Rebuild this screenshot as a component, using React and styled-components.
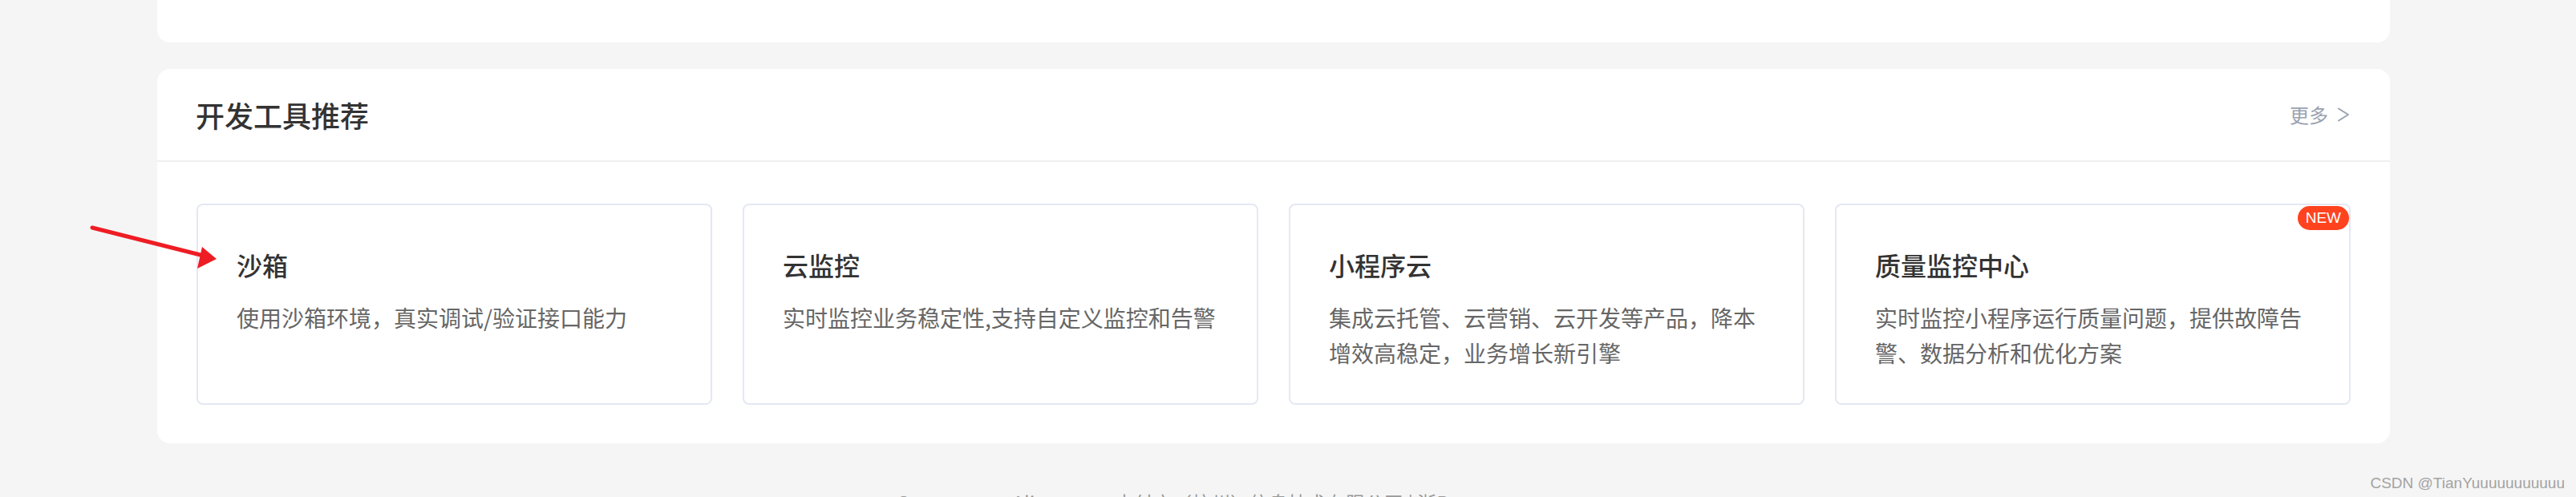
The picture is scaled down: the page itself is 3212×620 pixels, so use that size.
import React from 'react'
import styled, { createGlobalStyle } from 'styled-components'

const GlobalStyle = createGlobalStyle`
    * {
        box-sizing: border-box;
    }
    body {
        margin: 0;
        background: #f5f5f5;
        font-family: "Noto Sans CJK SC", "Noto Sans", "Liberation Sans", sans-serif;
        color: #333;
    }
`

const tools = [
    { title: '沙箱', desc: '使用沙箱环境，真实调试/验证接口能力' },
    { title: '云监控', desc: '实时监控业务稳定性,支持自定义监控和告警' },
    { title: '小程序云', desc: '集成云托管、云营销、云开发等产品，降本增效高稳定，业务增长新引擎' },
    { title: '质量监控中心', desc: '实时监控小程序运行质量问题，提供故障告警、数据分析和优化方案', isNew: true },
]

const Chevron = () => (
    <svg width='16' height='18' viewBox='0 0 16 18' fill='none'>
        <path d='M2 1.5 L14 9 L2 16.5' stroke='#9aa2b1' strokeWidth='2' strokeLinecap='round' strokeLinejoin='round' />
    </svg>
)

const Arrow = () => (
    <ArrowSvg width='300' height='360' viewBox='0 0 300 360'>
        <line x1='115' y1='284' x2='254' y2='319' stroke='#ee1d24' strokeWidth='5' strokeLinecap='round' />
        <polygon points='270,323 252,308 246,335' fill='#ee1d24' />
    </ArrowSvg>
)

const App = () => {
    return (
        <Page>
            <GlobalStyle />
            <TopPanel />
            <Section>
                <SectionHeader>
                    <h2>开发工具推荐</h2>
                    <MoreLink href='#'>
                        更多
                        <Chevron />
                    </MoreLink>
                </SectionHeader>
                <ToolGrid>
                    {tools.map((tool) => (
                        <ToolCard key={tool.title}>
                            {tool.isNew && <Badge>NEW</Badge>}
                            <h3>{tool.title}</h3>
                            <p>{tool.desc}</p>
                        </ToolCard>
                    ))}
                </ToolGrid>
            </Section>
            <Footer>© 2004-2024 Alipay.com 支付宝（杭州）信息技术有限公司 | 浙B2-20160559</Footer>
            <Watermark>CSDN @TianYuuuuuuuuuuu</Watermark>
            <Arrow />
        </Page>
    )
}

const Page = styled.div`
    position: relative;
    height: 620px;
    overflow: hidden;
    padding-left: 196px;
`

const TopPanel = styled.div`
    width: 2784px;
    height: 53px;
    background: #fff;
    border-radius: 0 0 16px 16px;
`

const Section = styled.section`
    width: 2784px;
    margin-top: 33px;
    background: #fff;
    border-radius: 16px;
`

const SectionHeader = styled.div`
    height: 116px;
    padding: 0 50px 0 48px;
    display: flex;
    align-items: center;
    justify-content: space-between;
    border-bottom: 2px solid #efefef;
    h2 {
        margin: 0;
        font-size: 36px;
        font-weight: 500;
        line-height: 48px;
        color: #333;
    }
`

const MoreLink = styled.a`
    display: flex;
    align-items: center;
    gap: 11px;
    font-size: 24px;
    line-height: 32px;
    color: #9aa2b1;
    text-decoration: none;
`

const ToolGrid = styled.div`
    display: grid;
    grid-template-columns: repeat(4, 643px);
    gap: 38px;
    padding: 52px 48px 48px 49px;
`

const ToolCard = styled.div`
    position: relative;
    height: 251px;
    padding: 50px 48px 0;
    border: 2px solid #e4e8f1;
    border-radius: 8px;
    h3 {
        margin: 0;
        font-size: 32px;
        font-weight: 500;
        line-height: 48px;
        color: #333;
    }
    p {
        margin: 20px 0 0;
        font-size: 28px;
        line-height: 44px;
        color: #666;
    }
`

const Badge = styled.span`
    position: absolute;
    top: 1px;
    right: 0;
    height: 30px;
    padding: 0 10px;
    border-radius: 15px;
    background: #ff431f;
    color: #fff;
    font-family: "Liberation Sans", Arial, sans-serif;
    font-size: 19px;
    line-height: 30px;
`

const Footer = styled.div`
    width: 2784px;
    padding: 56px 124px 0 0;
    text-align: center;
    font-size: 24px;
    line-height: 36px;
    color: #999;
`

const Watermark = styled.div`
    position: absolute;
    right: 14px;
    bottom: 6px;
    font-family: "Liberation Sans", Arial, sans-serif;
    font-size: 19px;
    line-height: 22px;
    color: #a3a3a3;
`

const ArrowSvg = styled.svg`
    position: absolute;
    left: 0;
    top: 0;
    pointer-events: none;
`

export default App
